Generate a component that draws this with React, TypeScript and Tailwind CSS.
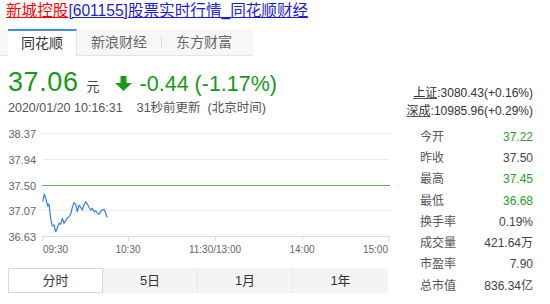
const font = "font-['Liberation_Sans','Noto_Sans_CJK_SC',sans-serif]";

const linePts: [number, number][] = [
  [42.7, 201.7], [44.3, 194], [46, 199.3], [47.7, 206], [49, 204], [50.7, 218.3], [52.3, 226], [54, 225],
  [55.7, 231.7], [57.3, 227.7], [59, 223.3], [60.7, 224.3], [62.3, 218.3], [64, 223.3], [65.7, 220.7],
  [67.3, 217.7], [69, 216.7], [70.7, 214], [72.3, 207.3], [74, 202.7], [75.7, 204.3], [77.3, 211.7],
  [79, 205], [80.7, 207.3], [82.3, 210], [84, 205], [85.7, 201.7], [87.3, 204], [89, 207.3], [90.7, 210],
  [92.3, 208.3], [94, 211.7], [95.7, 210.7], [97.3, 213.3], [99, 214.3], [100.7, 211.7], [102.3, 210],
  [104, 209.3], [105.7, 213.3], [107, 217.3],
];

const yLabels = [
  { v: "38.37", y: 8.5 },
  { v: "37.94", y: 34.5 },
  { v: "37.50", y: 60.5 },
  { v: "37.07", y: 85.5 },
  { v: "36.63", y: 111.5 },
];

const xTicks = [
  { t: "09:30", x: 43, anchor: "start" },
  { t: "10:30", x: 128, anchor: "middle" },
  { t: "11:30/13:00", x: 215, anchor: "middle" },
  { t: "14:00", x: 302, anchor: "middle" },
  { t: "15:00", x: 388, anchor: "end" },
] as const;

const stats = [
  { k: "今开", v: "37.22", green: true },
  { k: "昨收", v: "37.50" },
  { k: "最高", v: "37.45", green: true },
  { k: "最低", v: "36.68", green: true },
  { k: "换手率", v: "0.19%" },
  { k: "成交量", v: "421.64万" },
  { k: "市盈率", v: "7.90" },
  { k: "总市值", v: "836.34亿" },
];

function Chart() {
  return (
    <svg width={392} height={135} className="mt-[9px] block">
      {yLabels.map((l, i) => (
        <g key={l.v}>
          <line
            x1={42}
            x2={390}
            y1={l.y}
            y2={l.y}
            stroke={i === 2 ? "#5cb85c" : i === 4 ? "#dcdcdc" : "#ececec"}
            strokeWidth={1}
          />
          <text x={36} y={l.y + 4} textAnchor="end" fontSize={11} fill="#666" fontFamily="Liberation Sans, sans-serif">
            {l.v}
          </text>
        </g>
      ))}
      {xTicks.map((t) => (
        <g key={t.t}>
          <line x1={t.x + 0.5} x2={t.x + 0.5} y1={111.5} y2={116} stroke="#dcdcdc" />
          <text x={t.x} y={128} textAnchor={t.anchor} fontSize={10} fill="#666" fontFamily="Liberation Sans, sans-serif">
            {t.t}
          </text>
        </g>
      ))}
      <polyline
        points={linePts.map(([x, y]) => `${x},${y - 125}`).join(" ")}
        fill="none"
        stroke="#2f80f5"
        strokeWidth={1.2}
        strokeLinejoin="round"
      />
    </svg>
  );
}

export default function App() {
  return (
    <div className={`w-[550px] h-[304px] overflow-hidden bg-white ${font}`}>
      <div className="h-[22px] pl-[6px] pt-[1px] text-[15.6px] leading-[20px]">
        <a className="text-[#f00] underline">新城控股</a>
        <a className="text-[#1c1cdc] underline">[601155]股票实时行情_同花顺财经</a>
      </div>

      <div className="mt-[7px] flex h-[27px] w-[253px] border-b border-[#e4e4e4] bg-[#f7f7f7] text-[14px] text-[#666]">
        <div className="-mb-px ml-[8px] flex w-[69px] items-center justify-center border-t-2 border-r border-t-[#3d8ef0] border-r-[#e4e4e4] bg-white text-[#333]">
          同花顺
        </div>
        <div className="flex w-[84px] items-center justify-center">新浪财经</div>
        <div className="my-[7px] w-px bg-[#dedede]" />
        <div className="flex w-[84px] items-center justify-center">东方财富</div>
      </div>

      <div className="flex">
        <div className="w-[392px] shrink-0">
          <div className="ml-[8px] mt-[10px] flex h-[32px] items-baseline text-[#179a17]">
            <span className="text-[27px] leading-[32px] tracking-[0.6px]">37.06</span>
            <span className="ml-[8px] text-[13px] text-[#444]">元</span>
            <svg width={17} height={15} viewBox="0 0 17 15" className="ml-[15px] mb-[-1px]">
              <polygon points="5.5,0 11.5,0 11.5,7 17,7 8.5,15 0,7 5.5,7" fill="#179a17" />
            </svg>
            <span className="ml-[8px] text-[21.5px] leading-[32px]">-0.44 (-1.17%)</span>
          </div>
          <div className="ml-[8px] mt-[2px] text-[12.5px] leading-[16px] text-[#555]">
            <span>2020/01/20 10:16:31</span>
            <span className="ml-[14px]">31秒前更新</span>
            <span className="ml-[7px]">(北京时间)</span>
          </div>
          <Chart />
          <div className="ml-[8px] mt-[8px] flex h-[25px] w-[380px] text-[13px] text-[#333]">
            <div className="flex w-[95px] items-center justify-center border border-[#d8d8d8] bg-white">分时</div>
            <div className="flex w-[95px] items-center justify-center border-r border-[#e8e8e8] bg-[#f4f4f4]">5日</div>
            <div className="flex w-[95px] items-center justify-center border-r border-[#e8e8e8] bg-[#f4f4f4]">1月</div>
            <div className="flex w-[95px] items-center justify-center bg-[#f4f4f4]">1年</div>
          </div>
        </div>

        <div className="min-w-0 flex-1 whitespace-nowrap pl-[6px] pr-[17px] pt-[28px] text-[12px] text-[#333]">
          <div className="text-right leading-[18px]">
            <span className="underline decoration-[#555]">上证</span>:3080.43(+0.16%)
          </div>
          <div className="text-right leading-[18px]">
            <span className="underline decoration-[#555]">深成</span>:10985.96(+0.29%)
          </div>
          <div className="ml-[22px] mt-[6px]">
            {stats.map((s) => (
              <div key={s.k} className="flex h-[21.3px] items-center justify-between">
                <span className="text-[#555]">{s.k}</span>
                <span className={s.green ? "text-[#1f9e1f]" : "text-[#444]"}>{s.v}</span>
              </div>
            ))}
          </div>
        </div>
      </div>
    </div>
  );
}
